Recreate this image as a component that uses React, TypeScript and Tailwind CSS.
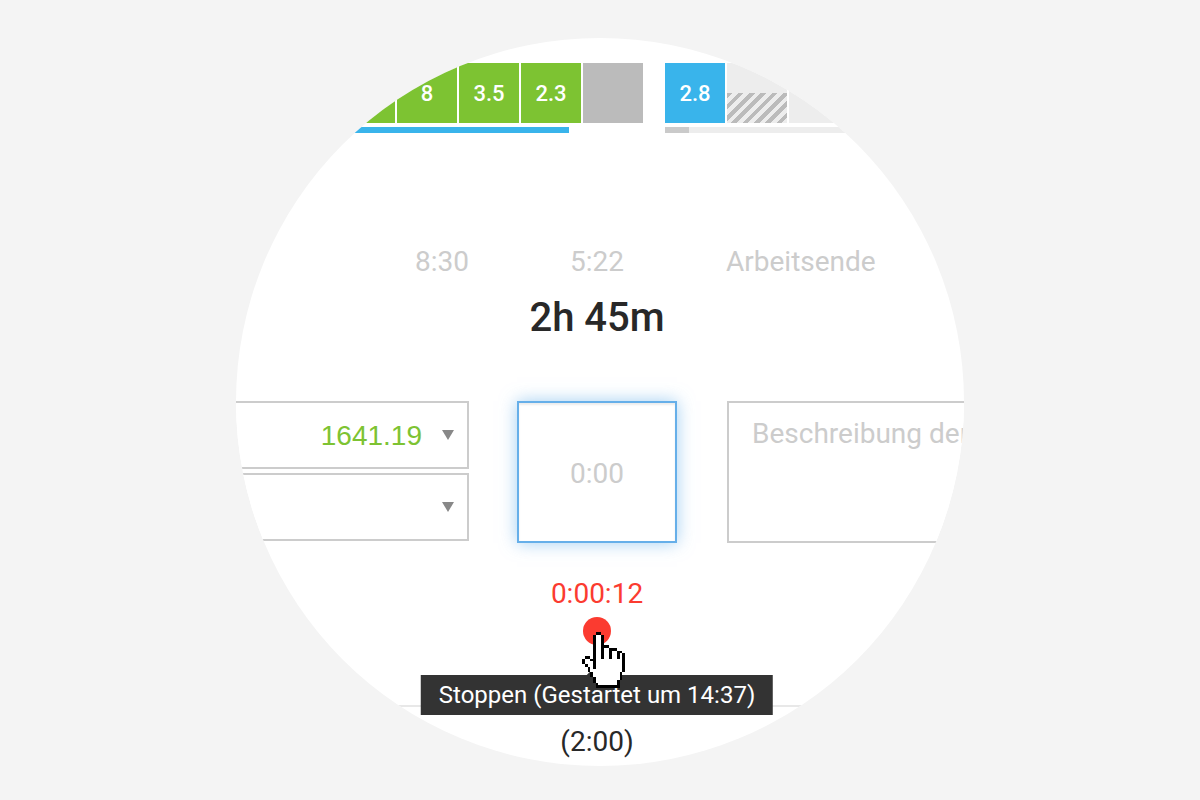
import React from "react";

type Day = { label?: string; tone: "done" | "today" | "off" | "empty" | "planned" };

const lastWeek: Day[] = [
  { tone: "done" },
  { label: "8", tone: "done" },
  { label: "3.5", tone: "done" },
  { label: "2.3", tone: "done" },
  { tone: "off" },
];

const thisWeek: Day[] = [
  { label: "2.8", tone: "today" },
  { tone: "planned" },
  { tone: "empty" },
];

const tones: Record<Day["tone"], string> = {
  done: "bg-[#7dc332]",
  today: "bg-[#39b4eb]",
  off: "bg-[#bbbbbb]",
  empty: "bg-[#ededed]",
  planned: "bg-[#ededed]",
};

function DayTile({ day }: { day: Day }) {
  return (
    <div
      className={`flex size-15 flex-col items-center justify-center text-[22px] font-medium text-white ${tones[day.tone]}`}
    >
      {day.tone === "planned" ? (
        <div className="mt-auto h-1/2 w-full bg-[repeating-linear-gradient(135deg,#bbb_0px,#bbb_4px,#ededed_4px,#ededed_8px)]" />
      ) : (
        day.label
      )}
    </div>
  );
}

function Week({ days, children }: { days: Day[]; children: React.ReactNode }) {
  return (
    <div className="flex flex-col gap-1">
      <div className="flex gap-0.5">
        {days.map((day, i) => (
          <DayTile key={i} day={day} />
        ))}
      </div>
      {children}
    </div>
  );
}

function Picker({ label, value }: { label: string; value: string }) {
  return (
    <div className="relative">
      <select
        aria-label={label}
        defaultValue={value}
        className="block h-17 w-full appearance-none border-2 border-l-0 border-[#ccc] bg-white pt-0.5 pr-[45px] font-['Liberation_Sans',sans-serif] text-[28px] text-[#7dc332] outline-none [text-align-last:right]"
      >
        <option value={value}>{value}</option>
      </select>
      <svg
        viewBox="0 0 12 10"
        className="pointer-events-none absolute top-[29px] right-[15px] h-2.5 w-3 fill-[#888]"
      >
        <path d="M0 0h12L6 10z" />
      </svg>
    </div>
  );
}

// # outline, o fill, . transparent
const hand = [
  ".....##.........",
  "....#oo#........",
  "....#oo#........",
  "....#oo#........",
  "....#oo#........",
  "....#oo###......",
  "....#oo#oo###...",
  "....#oo#oo#oo##.",
  "....#oo#oo#oo#o#",
  ".##.#oo#oo#oo#o#",
  "#oo##oooooooooo#",
  "#ooo#oooooooooo#",
  ".#oo#oooooooooo#",
  "..#o#oooooooooo#",
  "..#oooooooooooo#",
  "...#oooooooooo#.",
  "...#oooooooooo#.",
  "....#ooooooooo#.",
  "....#oooooooo#..",
  ".....#ooooooo#..",
  ".....#########..",
];

function HandCursor() {
  return (
    <svg
      viewBox="0 0 16 21"
      shapeRendering="crispEdges"
      className="pointer-events-none absolute top-[15px] -left-px h-14 w-[43px] max-w-none"
    >
      {hand.flatMap((row, y) =>
        [...row].map((c, x) =>
          c === "." ? null : (
            <rect key={`${x}-${y}`} x={x} y={y} width="1" height="1" fill={c === "#" ? "#000" : "#fff"} />
          ),
        ),
      )}
    </svg>
  );
}

const timeInput =
  "h-10 w-full bg-transparent p-0 text-[#ccc] outline-none placeholder:text-[#ccc]";

export default function App() {
  return (
    <div className="flex min-h-screen items-center justify-center bg-[#f4f4f4] pt-1 font-[Roboto,sans-serif] text-[28px] text-[#282828]">
      <main className="size-[728px] shrink-0 overflow-hidden rounded-full bg-white pt-[25px]">
        <div className="grid grid-cols-[407px_1fr] gap-x-[22px]">
          <div className="flex justify-end">
            <Week days={lastWeek}>
              <div className="h-1.5 w-[234px] bg-[#39b4eb]" />
            </Week>
          </div>
          <div className="flex">
            <Week days={thisWeek}>
              <div className="h-1.5 bg-[#ededed]">
                <div className="h-full w-6 bg-[#cacaca]" />
              </div>
            </Week>
          </div>
        </div>

        <div className="mt-[109px] grid grid-cols-[233px_160px_1fr] gap-x-12">
          <input aria-label="Arbeitsbeginn" defaultValue="8:30" className={`${timeInput} text-right`} />
          <input aria-label="Pause" defaultValue="5:22" className={`${timeInput} text-center`} />
          <div className="flex pl-px">
            <input aria-label="Arbeitsende" placeholder="Arbeitsende" className={timeInput} />
          </div>

          <h1 className="col-start-2 mt-3 text-center text-[40px] leading-12 font-medium whitespace-nowrap">
            2h 45m
          </h1>
        </div>

        <div className="mt-[59px] grid grid-cols-[233px_160px_1fr] gap-x-12">
          <div className="flex flex-col gap-1">
            <Picker label="Projekt" value="1641.19" />
            <Picker label="Leistung" value="" />
          </div>
          <input
            aria-label="Dauer"
            placeholder="0:00"
            className="h-[142px] w-full border-2 border-[#66afe9] bg-white pt-0.5 text-center shadow-[inset_0_2px_2px_rgba(0,0,0,0.075),0_0_16px_rgba(102,175,233,0.6)] outline-none placeholder:text-[#ccc]"
          />
          <div className="pl-0.5">
            <textarea
              aria-label="Beschreibung"
              placeholder="Beschreibung der"
              className="block h-[142px] w-[300px] resize-none border-2 border-[#ccc] bg-white px-[23px] py-[13px] leading-9 outline-none placeholder:text-[#ccc]"
            />
          </div>
        </div>

        <div className="mt-[31px] grid grid-cols-[233px_160px_1fr] gap-x-12">
          <div className="col-start-2 flex flex-col items-center gap-[3px]">
            <output className="leading-10 text-[#fb3b30]">0:00:12</output>
            <div className="relative flex">
              <button
                type="button"
                aria-label="Stoppen"
                aria-describedby="stop-hint"
                className="size-7 cursor-pointer rounded-full bg-[#fb3b30]"
              />
              <div
                id="stop-hint"
                role="tooltip"
                className="absolute top-[58px] left-1/2 -translate-x-1/2 bg-[#333] px-[18px] text-2xl leading-10 whitespace-nowrap text-white"
              >
                <svg viewBox="0 0 20 10" className="absolute bottom-full left-1/2 h-2.5 w-5 -translate-x-1/2 fill-[#333]">
                  <path d="M0 10L10 0l10 10z" />
                </svg>
                Stoppen (Gestartet um 14:37)
              </div>
              <HandCursor />
            </div>
          </div>
        </div>

        <hr className="mt-15 border-t-2 border-[#e8e8e8]" />

        <div className="mt-[15px] grid grid-cols-[233px_160px_1fr] gap-x-12">
          <p className="col-start-2 text-center leading-10">(2:00)</p>
        </div>
      </main>
    </div>
  );
}
